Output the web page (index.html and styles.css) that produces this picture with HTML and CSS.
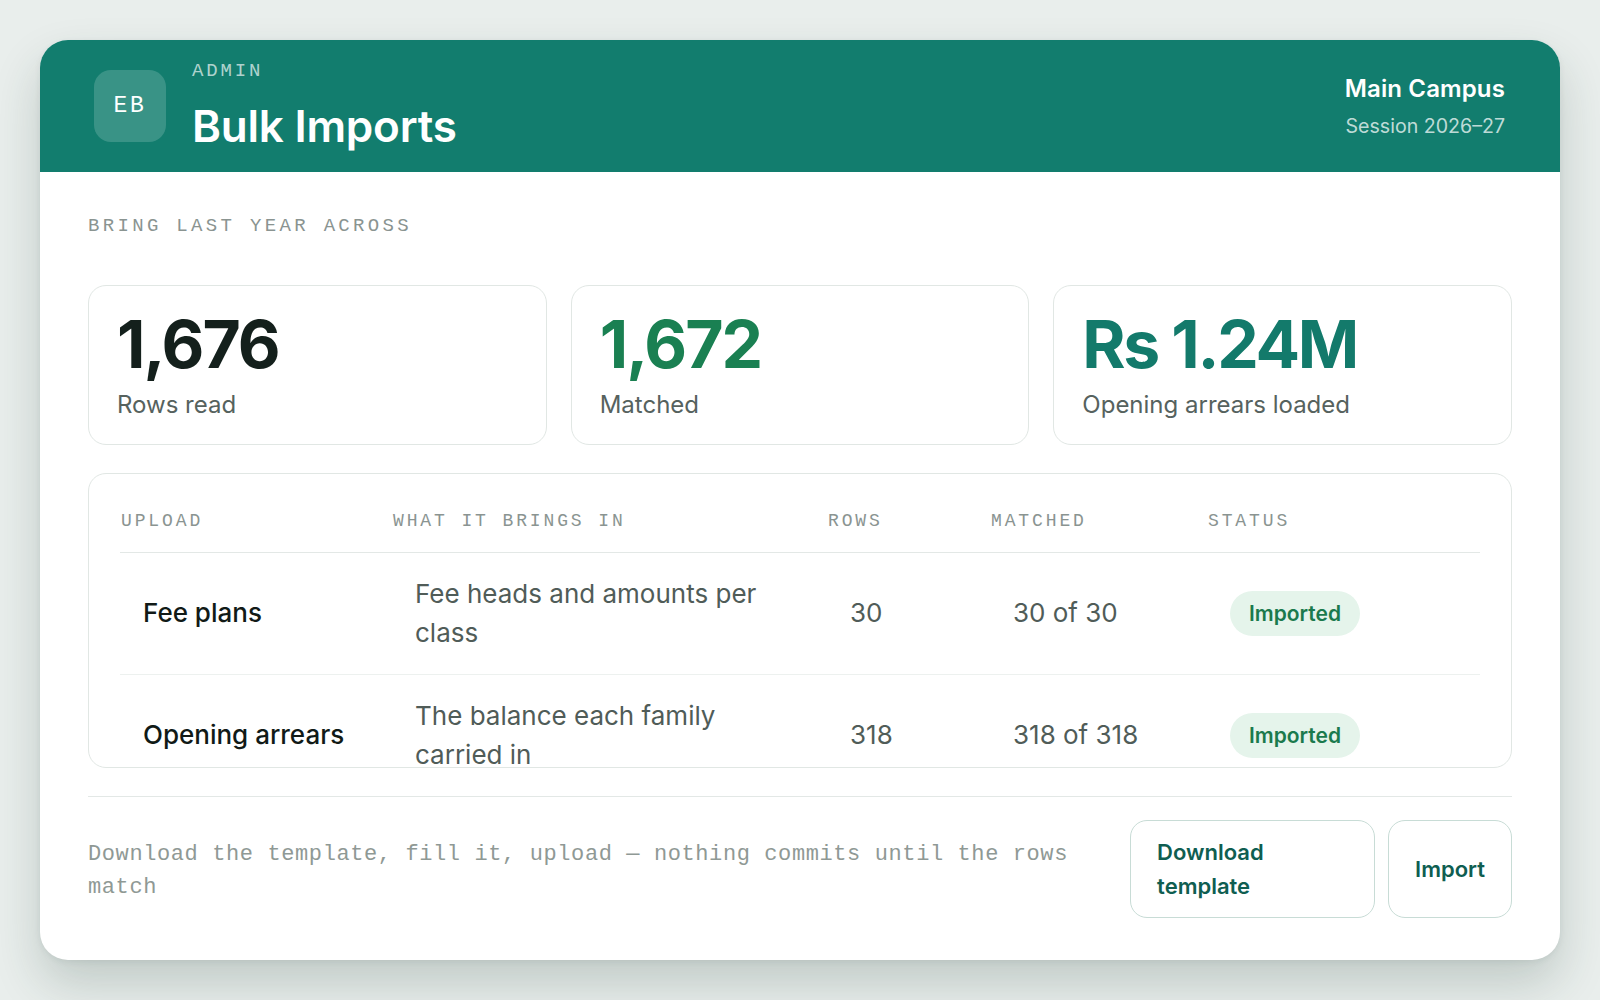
FILE: index.html
```html
<!DOCTYPE html>
<html lang="en">
<head>
<meta charset="utf-8">
<title>Bulk Imports</title>
<link rel="stylesheet" href="styles.css">
</head>
<body>
<div class="card">
  <header class="topbar">
    <div class="brand">
      <div class="avatar">EB</div>
      <div class="titles">
        <div class="eyebrow">ADMIN</div>
        <h1 class="title">Bulk Imports</h1>
      </div>
    </div>
    <div class="campus">
      <div class="campus-name">Main Campus</div>
      <div class="session">Session 2026–27</div>
    </div>
  </header>

  <main class="content">
    <div class="kicker">BRING LAST YEAR ACROSS</div>

    <section class="stats">
      <div class="stat">
        <div class="stat-value">1,676</div>
        <div class="stat-label">Rows read</div>
      </div>
      <div class="stat">
        <div class="stat-value green">1,672</div>
        <div class="stat-label">Matched</div>
      </div>
      <div class="stat">
        <div class="stat-value teal">Rs 1.24M</div>
        <div class="stat-label">Opening arrears loaded</div>
      </div>
    </section>

    <section class="table-card">
      <table class="imports">
        <colgroup>
          <col class="c-upload">
          <col class="c-what">
          <col class="c-rows">
          <col class="c-matched">
          <col class="c-status">
        </colgroup>
        <thead>
          <tr>
            <th>UPLOAD</th>
            <th>WHAT IT BRINGS IN</th>
            <th>ROWS</th>
            <th>MATCHED</th>
            <th>STATUS</th>
          </tr>
        </thead>
        <tbody>
          <tr>
            <td class="name">Fee plans</td>
            <td class="muted desc">Fee heads and amounts per class</td>
            <td class="muted">30</td>
            <td class="muted">30 of 30</td>
            <td><span class="pill">Imported</span></td>
          </tr>
          <tr>
            <td class="name">Opening arrears</td>
            <td class="muted desc">The balance each family carried in</td>
            <td class="muted">318</td>
            <td class="muted">318 of 318</td>
            <td><span class="pill">Imported</span></td>
          </tr>
        </tbody>
      </table>
    </section>

    <footer class="footer">
      <p class="note">Download the template, fill it, upload — nothing commits until the rows match</p>
      <div class="actions">
        <button class="btn btn-wide">Download template</button>
        <button class="btn">Import</button>
      </div>
    </footer>
  </main>
</div>
</body>
</html>
```

FILE: styles.css
```css
* { box-sizing: border-box; }

html, body {
  margin: 0;
  height: 100%;
}

body {
  background: #e9eeec;
  padding: 40px;
  font-family: Inter, "Noto Sans", sans-serif;
  color: #15201c;
}

.card {
  height: 920px;
  background: #ffffff;
  border-radius: 28px;
  box-shadow: 0 24px 48px rgba(30, 60, 50, 0.2), 0 2px 6px rgba(30, 60, 50, 0.07);
  display: flex;
  flex-direction: column;
  overflow: hidden;
}

/* header */
.topbar {
  background: #127d6e;
  color: #ffffff;
  display: flex;
  align-items: center;
  justify-content: space-between;
  height: 132px;
  padding: 0 55px 0 54px;
  flex: 0 0 auto;
}

.brand {
  display: flex;
  align-items: center;
  gap: 26px;
}

.avatar {
  width: 72px;
  height: 72px;
  border-radius: 17px;
  background: rgba(255, 255, 255, 0.17);
  display: flex;
  align-items: center;
  justify-content: center;
  font-family: "Liberation Mono", "DejaVu Sans Mono", monospace;
  font-size: 23px;
  letter-spacing: 0.12em;
  color: #ffffff;
}

.titles {
  margin-top: -5px;
}

.eyebrow {
  font-family: "Liberation Mono", "DejaVu Sans Mono", monospace;
  font-size: 19px;
  line-height: 24px;
  letter-spacing: 0.15em;
  color: rgba(255, 255, 255, 0.68);
}

.title {
  margin: 20px 0 0;
  font-size: 44px;
  line-height: 46px;
  font-weight: 600;
  letter-spacing: -0.005em;
}

.campus {
  text-align: right;
}

.campus-name {
  font-size: 24px;
  line-height: 30px;
  font-weight: 600;
  letter-spacing: 0.005em;
}

.session {
  margin-top: 9px;
  font-size: 19.6px;
  line-height: 26px;
  color: rgba(255, 255, 255, 0.74);
}

/* content */
.content {
  flex: 1 1 auto;
  min-height: 0;
  display: flex;
  flex-direction: column;
  gap: 28px;
  padding: 40px 48px 42px;
}

.kicker {
  font-family: "Liberation Mono", "DejaVu Sans Mono", monospace;
  font-size: 19px;
  line-height: 28px;
  letter-spacing: 0.175em;
  color: #8a9491;
  margin-bottom: 17px;
}

.stats {
  display: grid;
  grid-template-columns: repeat(3, 1fr);
  gap: 24px;
  flex: 0 0 auto;
}

.stat {
  border: 1px solid #e1e7e4;
  border-radius: 18px;
  padding: 22px 28px;
  height: 160px;
}

.stat-value {
  font-size: 66px;
  line-height: 72px;
  font-weight: 700;
  letter-spacing: -0.03em;
  color: #14201c;
}

.stat-value.green { color: #1a8052; }
.stat-value.teal { color: #137a6b; letter-spacing: -0.035em; }

.stat-label {
  margin-top: 8px;
  font-size: 24px;
  line-height: 34px;
  color: #56625e;
}

/* table */
.table-card {
  flex: 1 1 auto;
  min-height: 0;
  overflow: hidden;
  border: 1px solid #e1e7e4;
  border-radius: 18px;
  padding: 33px 31px 0;
}

.imports {
  width: 100%;
  border-collapse: collapse;
  table-layout: fixed;
}

.c-upload { width: 272px; }
.c-what { width: 435px; }
.c-rows { width: 163px; }
.c-matched { width: 217px; }

.imports th {
  text-align: left;
  font-family: "Liberation Mono", "DejaVu Sans Mono", monospace;
  font-weight: 400;
  font-size: 18px;
  line-height: 28px;
  letter-spacing: 0.16em;
  color: #8a9491;
  padding: 0 0 17px 1px;
  border-bottom: 1px solid #e3e8e6;
}

.imports td {
  padding: 22px 22px 22px 23px;
  font-size: 26px;
  line-height: 38.5px;
  vertical-align: middle;
  border-bottom: 1px solid #edf1ef;
}

.imports td.name {
  font-weight: 500;
  color: #111a17;
}

.imports td.muted {
  color: #505c58;
}

.imports td.desc {
  padding-right: 43px;
}

.pill {
  display: inline-block;
  background: #e5f4eb;
  color: #1b7a4d;
  font-size: 21px;
  line-height: 29px;
  font-weight: 600;
  padding: 8px 19px;
  border-radius: 999px;
  vertical-align: middle;
}

/* footer */
.footer {
  flex: 0 0 auto;
  border-top: 1px solid #e3e8e6;
  padding-top: 23px;
  display: flex;
  align-items: center;
  gap: 24px;
}

.note {
  flex: 1 1 auto;
  margin: 4px 0 0;
  font-family: "Liberation Mono", "DejaVu Sans Mono", monospace;
  font-size: 22px;
  line-height: 33px;
  letter-spacing: 0.6px;
  color: #8f9995;
}

.actions {
  display: flex;
  gap: 13px;
  flex: 0 0 auto;
}

.btn {
  font-family: Inter, "Noto Sans", sans-serif;
  background: #ffffff;
  border: 1px solid #c8dcd6;
  border-radius: 17px;
  color: #0f5e51;
  font-size: 22px;
  line-height: 34px;
  font-weight: 600;
  padding: 14px 26px;
  height: 98px;
  text-align: left;
}

.btn-wide {
  width: 245px;
}
```
